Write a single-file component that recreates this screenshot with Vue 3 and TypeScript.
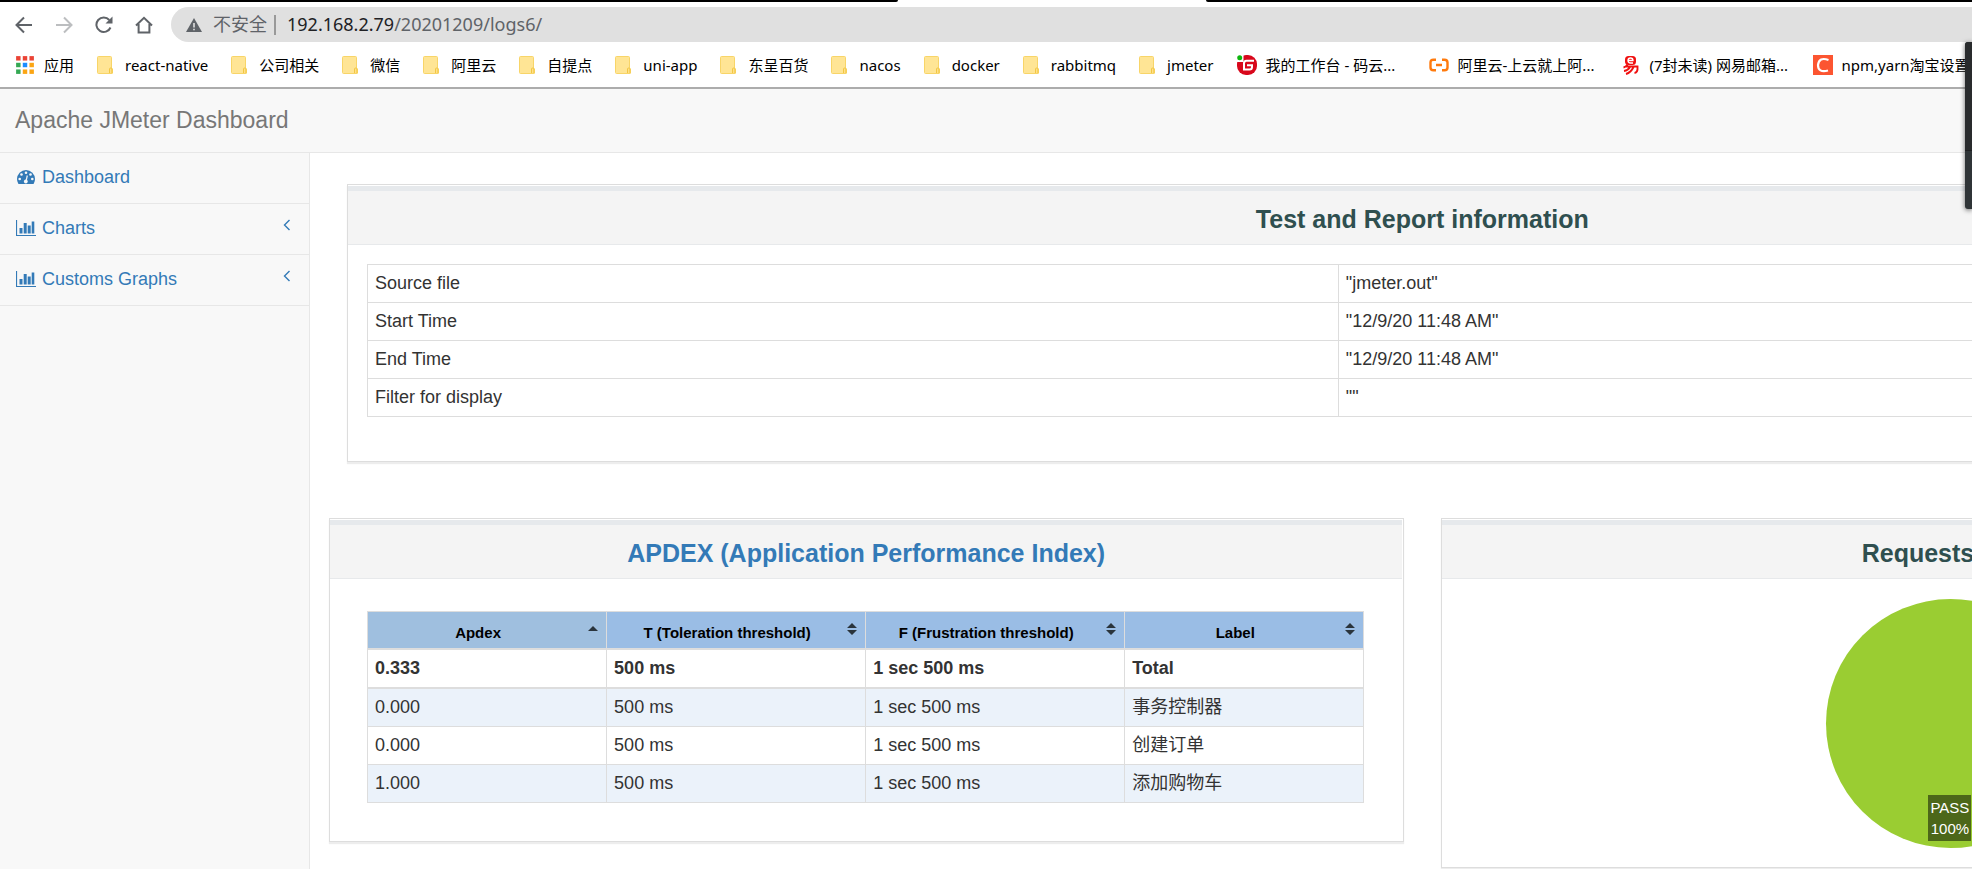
<script setup lang="ts">
import { ref } from 'vue'

interface Bookmark {
  label: string
  icon: 'apps' | 'folder' | 'gitee' | 'aliyun' | 'netease' | 'csdn'
}

const bookmarks: Bookmark[] = [
  { label: '应用', icon: 'apps' },
  { label: 'react-native', icon: 'folder' },
  { label: '公司相关', icon: 'folder' },
  { label: '微信', icon: 'folder' },
  { label: '阿里云', icon: 'folder' },
  { label: '自提点', icon: 'folder' },
  { label: 'uni-app', icon: 'folder' },
  { label: '东呈百货', icon: 'folder' },
  { label: 'nacos', icon: 'folder' },
  { label: 'docker', icon: 'folder' },
  { label: 'rabbitmq', icon: 'folder' },
  { label: 'jmeter', icon: 'folder' },
  { label: '我的工作台 - 码云...', icon: 'gitee' },
  { label: '阿里云-上云就上阿...', icon: 'aliyun' },
  { label: '(7封未读) 网易邮箱...', icon: 'netease' },
  { label: 'npm,yarn淘宝设置', icon: 'csdn' },
]

const appColors = ['#ea4335', '#ea4335', '#ea4335', '#34a853', '#1a8cff', '#fba514', '#34a853', '#fba514', '#fba514']

const menu = [
  { label: 'Dashboard', chart: false },
  { label: 'Charts', chart: true },
  { label: 'Customs Graphs', chart: true },
]

const info: [string, string][] = [
  ['Source file', '"jmeter.out"'],
  ['Start Time', '"12/9/20 11:48 AM"'],
  ['End Time', '"12/9/20 11:48 AM"'],
  ['Filter for display', '""'],
]

const columns = ['Apdex', 'T (Toleration threshold)', 'F (Frustration threshold)', 'Label']
const sortedBy = ref(0)

const total = ['0.333', '500 ms', '1 sec 500 ms', 'Total']
const rows = [
  ['0.000', '500 ms', '1 sec 500 ms', '事务控制器'],
  ['0.000', '500 ms', '1 sec 500 ms', '创建订单'],
  ['1.000', '500 ms', '1 sec 500 ms', '添加购物车'],
]
</script>

<template>
  <div class="window">
    <header class="browser">
      <div class="tabs"><span class="strip left"></span><span class="active-tab"></span><span class="strip right"></span></div>
      <div class="toolbar">
        <nav class="nav-buttons" aria-label="Navigation">
          <button type="button" aria-label="Back">
            <svg viewBox="0 0 18 18"><path d="M17 9H2M9 1.500L1.500 9L9 16.500" /></svg>
          </button>
          <button type="button" aria-label="Forward" class="muted">
            <svg viewBox="0 0 18 18"><path d="M1 9H16M9 1.500L16.500 9L9 16.500" /></svg>
          </button>
          <button type="button" aria-label="Reload">
            <svg viewBox="0 0 18 18"><path d="M15.500 11.500A7.300 7.300 0 1 1 14.300 4" /><path class="solid" d="M17.500 0.500V7.500H10.500Z" /></svg>
          </button>
          <button type="button" aria-label="Home">
            <svg viewBox="0 0 18 18"><path d="M1 9.500L9 1.800L17 9.500M3.600 8V16.500H14.400V8" /></svg>
          </button>
        </nav>
        <div class="omnibox">
          <svg class="warning" viewBox="0 0 16 14"><path d="M8 0L16 14H0Z" fill="#5f6368" /><path d="M7.200 5h1.600v4.500H7.200zM7.200 10.700h1.600v1.600H7.200z" fill="#e0e0e0" /></svg>
          <span class="unsafe">不安全</span>
          <span class="divider"></span>
          <span class="url"><b>192.168.2.79</b>/20201209/logs6/</span>
        </div>
      </div>
      <nav class="bookmarks" aria-label="Bookmarks">
        <a v-for="b in bookmarks" :key="b.label" href="#" :class="[b.icon, { site: b.icon !== 'apps' && b.icon !== 'folder' }]">
          <svg v-if="b.icon === 'apps'" viewBox="0 0 18 18">
            <rect v-for="(c, i) in appColors" :key="i" :x="1 + (i % 3) * 6" :y="1 + Math.floor(i / 3) * 6" width="4" height="4" :fill="c" />
          </svg>
          <svg v-else-if="b.icon === 'folder'" viewBox="0 0 16 18">
            <path d="M1.500 .5h12q1 0 1 1v10.500l1 1V17q0 .5-.5.500H1.500q-1 0-1-1V1.500q0-1 1-1z" fill="#ffe595" stroke="#f8d568" />
            <path d="M12.500 17V13q0-1 1.200-1t1.200 1v4" fill="#ffe08a" stroke="#f2c744" />
          </svg>
          <svg v-else-if="b.icon === 'gitee'" viewBox="0 0 20 20">
            <rect x="0" y="0" width="20" height="20" rx="9" fill="#d8071b" />
            <path d="M0 0H6.500V7H0z" fill="#fff" />
            <path d="M17 5.800H9.500Q7 5.800 7 8.300V14.500H12.500Q15 14.500 15 12V10.300H10" fill="none" stroke="#fff" stroke-width="2" />
            <circle cx="2.700" cy="2.700" r="2.500" fill="#0eb50e" />
          </svg>
          <svg v-else-if="b.icon === 'aliyun'" viewBox="0 0 20 20">
            <path d="M7 4.700H4.500Q1.500 4.700 1.500 7.500v5q0 2.800 3 2.800H7M13 4.700h2.500q3 0 3 2.800v5q0 2.800-3 2.800H13M7 10h6" fill="none" stroke="#ff7a0d" stroke-width="2.400" />
          </svg>
          <svg v-else-if="b.icon === 'netease'" viewBox="0 0 20 20">
            <rect x="4" y="1" width="11" height="9" rx="3.500" fill="#f01010" />
            <path d="M7 5.500h5Q12 3 9.500 3T7 5.500t2.500 2.500H12" fill="none" stroke="#fff" stroke-width="1.300" />
            <path d="M2.500 12.500Q5 12 6.500 9.500M5 11.500h11.500q.5 6-3 6.500M9 12Q7 15.500 3 16M12.500 12Q10 17.500 5 19" fill="none" stroke="#f01010" stroke-width="1.900" />
          </svg>
          <svg v-else viewBox="0 0 20 20">
            <rect width="20" height="20" fill="#fc5531" />
            <path d="M15.500 5Q6 1.500 5 10q0 8 10 5.500" fill="none" stroke="#fff" stroke-width="2.200" />
          </svg>
          <span>{{ b.label }}</span>
        </a>
      </nav>
    </header>

    <div class="page">
      <header class="navbar"><a href="#">Apache JMeter Dashboard</a></header>
      <div class="body">
        <nav class="sidebar" aria-label="Report">
          <a v-for="m in menu" :key="m.label" href="#">
            <svg v-if="m.chart" class="glyph" viewBox="0 0 20 16">
              <path d="M.5 0V15.500H20" fill="none" stroke="currentColor" stroke-width="1.200" />
              <path d="M3.500 8h3v5.500h-3zM7.700 3h3v10.500h-3zM11.700 5.500h3v8h-3zM15.700 1.500h2.600v12h-2.600z" fill="currentColor" />
            </svg>
            <svg v-else class="glyph" viewBox="0 0 20 16">
              <path d="M10 1a9 9 0 0 1 9 9q0 2.600-1.300 4.700-.2.300-.6.300H2.900q-.4 0-.6-.3Q1 12.600 1 10a9 9 0 0 1 9-9z" fill="currentColor" />
              <g fill="#f8f8f8"><circle cx="10" cy="3.700" r="1.300" /><circle cx="5.500" cy="5.500" r="1.300" /><circle cx="14.500" cy="5.500" r="1.300" /><circle cx="3.700" cy="10" r="1.300" /><circle cx="16.300" cy="10" r="1.300" /><circle cx="9.800" cy="12.500" r="1.900" /></g>
              <path d="M10 12.500L11.300 6.500" stroke="#f8f8f8" stroke-width="1.200" />
            </svg>
            <span>{{ m.label }}</span>
            <svg v-if="m.chart" class="chevron" viewBox="0 0 8 12"><path d="M6.500 1L1.500 6L6.500 11" fill="none" stroke="currentColor" stroke-width="1.400" /></svg>
          </a>
        </nav>

        <main>
          <section class="panel report">
            <h2>Test and Report information</h2>
            <table>
              <tbody>
                <tr v-for="r in info" :key="r[0]"><td>{{ r[0] }}</td><td>{{ r[1] }}</td></tr>
              </tbody>
            </table>
          </section>

          <div class="columns">
            <section class="panel apdex">
              <h2><a href="#">APDEX (Application Performance Index)</a></h2>
              <table>
                <thead>
                  <tr>
                    <th v-for="(c, i) in columns" :key="c" :class="{ sorted: i === sortedBy }" @click="sortedBy = i">
                      <div>
                        <span>{{ c }}</span>
                        <svg viewBox="0 0 10 12">
                          <path v-if="i === sortedBy" d="M5 3L10 8H0z" />
                          <path v-else d="M5 0L10 5H0zM0 7H10L5 12z" />
                        </svg>
                      </div>
                    </th>
                  </tr>
                </thead>
                <tbody class="total"><tr><td v-for="t in total" :key="t">{{ t }}</td></tr></tbody>
                <tbody class="rows">
                  <tr v-for="r in rows" :key="r[3]"><td v-for="(v, i) in r" :key="i">{{ v }}</td></tr>
                </tbody>
              </table>
            </section>

            <section class="panel summary">
              <h2>Requests Summary</h2>
              <div class="chart">
                <div class="pie">
                  <div class="pie-label">PASS<br />100%</div>
                </div>
              </div>
            </section>
          </div>
        </main>
      </div>
    </div>
    <div class="side-popup"><span></span></div>
  </div>
</template>

<style>
body {
  margin: 0;
}
</style>

<style scoped>
* {
  box-sizing: border-box;
}
.window {
  position: relative;
  display: flex;
  flex-direction: column;
  min-height: 100vh;
  overflow: hidden;
  background: #fff;
  color: #333;
  font: 18px/25px "Liberation Sans", "Noto Sans CJK SC", sans-serif;
}
a {
  color: #337ab7;
  text-decoration: none;
}
.browser {
  border-bottom: 2px solid #acacac;
  font-family: "Noto Sans", "Noto Sans CJK SC", sans-serif;
}
.tabs {
  display: flex;
  height: 2px;
}
.strip {
  background: #000;
}
.strip.left {
  width: 898px;
  border-bottom-right-radius: 2px;
}
.strip.right {
  flex: 1;
  border-bottom-left-radius: 2px;
}
.active-tab {
  width: 308px;
}
.toolbar {
  display: flex;
  align-items: center;
  padding-top: 5px;
}
.nav-buttons {
  display: flex;
  gap: 22px;
  padding: 0 18px 0 15px;
}
.nav-buttons button {
  width: 18px;
  height: 18px;
  padding: 0;
  border: 0;
  background: none;
  color: #5f6368;
}
.nav-buttons button.muted {
  color: #bcbec0;
}
.nav-buttons svg {
  display: block;
  fill: none;
  stroke: currentColor;
  stroke-width: 2;
}
.nav-buttons .solid {
  fill: currentColor;
  stroke: none;
}
.omnibox {
  display: flex;
  flex: 1;
  align-items: center;
  height: 35px;
  padding-left: 15px;
  border-radius: 18px 0 0 18px;
  background: #e0e0e0;
  color: #5f6368;
}
.warning {
  width: 16px;
  height: 14px;
}
.unsafe {
  margin-left: 11px;
}
.divider {
  width: 2px;
  height: 20px;
  margin: 0 11px 0 7px;
  background: #999;
}
.url b {
  color: #202124;
  font-weight: 400;
}
.bookmarks {
  display: flex;
  align-items: center;
  gap: 23px;
  height: 45px;
  padding-left: 15px;
  font-size: 15px;
  line-height: 20px;
  white-space: nowrap;
}
.bookmarks a {
  display: flex;
  flex: none;
  align-items: center;
  gap: 9px;
  color: #000;
}
.bookmarks a.folder {
  gap: 12px;
}
.bookmarks a.site span {
  min-width: 140px;
}
.bookmarks svg {
  width: 20px;
  height: 20px;
}
.bookmarks .folder svg {
  width: 16px;
  height: 18px;
}
.page {
  display: flex;
  flex: 1;
  flex-direction: column;
  width: 130%;
}
.navbar {
  display: flex;
  align-items: center;
  height: 64px;
  padding-left: 15px;
  border-bottom: 1px solid #e7e7e7;
  background: #f8f8f8;
  font-size: 23px;
}
.navbar a {
  color: #777;
}
.body {
  display: flex;
  flex: 1;
}
.sidebar {
  flex: none;
  width: 310px;
  border-right: 1px solid #e7e7e7;
  background: #f8f8f8;
}
.sidebar a {
  display: flex;
  align-items: flex-start;
  height: 51px;
  padding: 12px 18px 0 16px;
  border-bottom: 1px solid #e7e7e7;
}
.glyph {
  width: 20px;
  height: 16px;
  margin: 4px 6px 0 0;
}
.chevron {
  width: 8px;
  height: 12px;
  margin: 3px 0 0 auto;
}
main {
  flex: 1;
  min-width: 0;
  padding: 31px 47px 0 19px;
}
.panel {
  border: 1px solid #ddd;
  background: #fff;
  box-shadow: 0 2px 1px rgba(0, 0, 0, 0.07);
}
h2 {
  margin: 1px 1px 0 0;
  padding: 16px 0 12px;
  border-top: 5px solid #e6e9ec;
  border-bottom: 1px solid #e7e9eb;
  background: #f4f4f4;
  color: #2f4f4f;
  font-size: 25px;
  font-weight: 700;
  line-height: 25px;
  text-align: center;
}
table {
  border-collapse: collapse;
}
td {
  padding: 6px 7px;
  border: 1px solid #ddd;
}
.report {
  height: 278px;
  margin: 0 18px 56px;
}
.report table {
  width: calc(100% - 38px);
  margin: 19px;
}
.report td:first-child {
  width: 46%;
}
.columns {
  display: grid;
  grid-template-columns: 1fr 1fr;
  gap: 37px;
  align-items: start;
}
.apdex table {
  width: calc(100% - 76px);
  margin: 32px 37px 38px;
  table-layout: fixed;
}
th {
  padding: 7px 8px 3px;
  border: 1px solid #ddd;
  border-bottom-width: 2px;
  background: #9abde5;
  color: #000;
  font-size: 15px;
  cursor: pointer;
}
th:nth-child(1),
th:nth-child(4) {
  width: 24%;
}
th:nth-child(2) {
  width: 26%;
}
th.sorted {
  background: #9fbfdf;
}
th div {
  display: flex;
  gap: 8px;
  align-items: flex-start;
}
th span {
  flex: 1;
  padding-top: 1px;
  line-height: 25px;
  white-space: nowrap;
}
th svg {
  width: 10px;
  height: 12px;
  margin-top: 4px;
  fill: #2a343c;
}
.total td {
  border-bottom-width: 2px;
  font-weight: 700;
}
.rows tr:nth-child(odd) {
  background: #ebf2fa;
}
.summary {
  height: 350px;
}
.chart {
  display: flex;
  justify-content: center;
  padding: 20px 56px 0 0;
}
.pie {
  position: relative;
  width: 249px;
  height: 249px;
  border-radius: 50%;
  background: #9acd32;
}
.pie-label {
  position: absolute;
  left: 102px;
  bottom: 7px;
  padding: 2px;
  background: #4c6719;
  color: #fff;
  font-size: 15px;
  line-height: 21px;
  text-align: center;
}
.side-popup {
  position: absolute;
  top: 42px;
  right: 0;
  width: 7px;
  height: 167px;
  border-radius: 3px 0 0 3px;
  background: #2f3437;
  box-shadow: 0 1px 5px rgba(0, 0, 0, 0.6);
}
.side-popup span {
  display: block;
  height: 109px;
  border-bottom: 1px solid #1e2022;
  border-radius: 3px 0 0;
  background: #292b2d;
}
</style>
